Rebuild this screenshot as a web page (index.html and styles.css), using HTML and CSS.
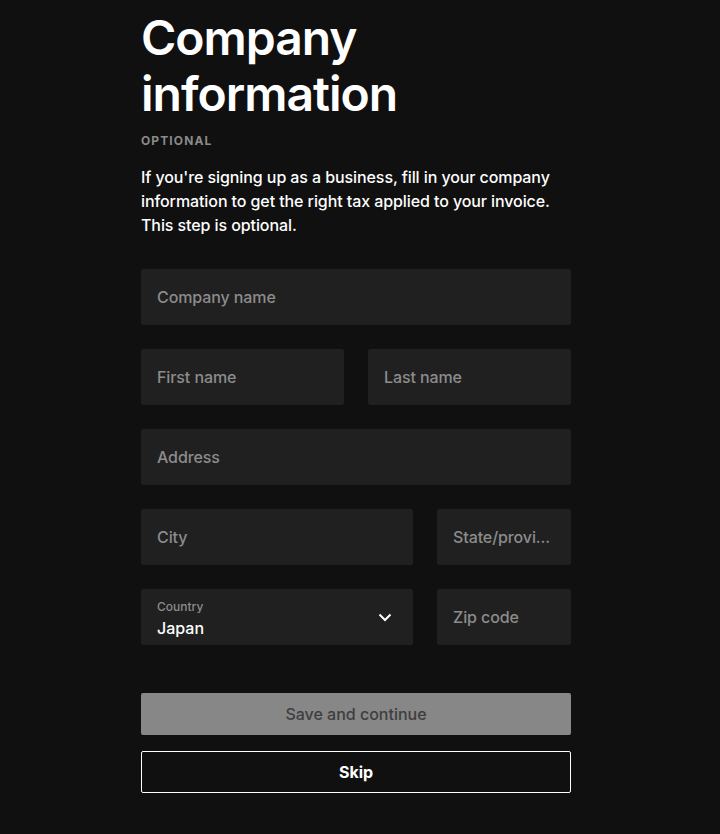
FILE: index.html
```html
<!DOCTYPE html>
<html lang="en">
<head>
<meta charset="utf-8">
<title>Company information</title>
<link rel="stylesheet" href="styles.css">
</head>
<body>
<main class="page">
  <h1 class="title">Company information</h1>
  <div class="eyebrow">OPTIONAL</div>
  <p class="intro">If you're signing up as a business, fill in your company information to get the right tax applied to your invoice. This step is optional.</p>
  <form class="form">
    <div class="field"><span class="ph">Company name</span></div>
    <div class="row half">
      <div class="field"><span class="ph">First name</span></div>
      <div class="field"><span class="ph">Last name</span></div>
    </div>
    <div class="field"><span class="ph">Address</span></div>
    <div class="row wide">
      <div class="field"><span class="ph">City</span></div>
      <div class="field"><span class="ph">State/provi...</span></div>
    </div>
    <div class="row wide">
      <div class="field select">
        <div class="sel-text">
          <span class="sel-label">Country</span>
          <span class="sel-value">Japan</span>
        </div>
        <svg class="chev" width="14" height="9" viewBox="0 0 14 9"><path d="M1.5 1.5 L7 7 L12.5 1.5" fill="none" stroke="#ffffff" stroke-width="2"/></svg>
      </div>
      <div class="field"><span class="ph">Zip code</span></div>
    </div>
    <div class="actions">
      <button type="button" class="btn save">Save and continue</button>
      <button type="button" class="btn skip">Skip</button>
    </div>
  </form>
</main>
</body>
</html>
```
FILE: styles.css
```css
html, body {
  margin: 0;
  padding: 0;
  background: #101010;
}
body {
  font-family: Inter, "Noto Sans", "Liberation Sans", sans-serif;
  color: #ffffff;
  height: 834px;
  overflow: hidden;
}
.page {
  width: 430px;
  margin-left: 141px;
  padding-top: 10px;
}
.title {
  margin: 0;
  font-size: 48px;
  line-height: 56px;
  font-weight: 600;
  letter-spacing: -1px;
}
.eyebrow {
  margin-top: 11px;
  font-size: 12px;
  line-height: 16px;
  font-weight: 700;
  letter-spacing: 1.1px;
  color: #8a8a8a;
}
.intro {
  margin: 16px 0 0;
  font-size: 16px;
  line-height: 24px;
  font-weight: 500;
  letter-spacing: -0.09px;
  color: #ffffff;
}
.form {
  margin-top: 32px;
  display: flex;
  flex-direction: column;
  gap: 24px;
}
.row {
  display: grid;
  gap: 24px;
}
.row.half { grid-template-columns: 1fr 1fr; }
.row.wide { grid-template-columns: 272px 1fr; }
.field {
  height: 56px;
  background: #202020;
  border-radius: 2px;
  display: flex;
  align-items: center;
  padding: 0 16px;
  box-sizing: border-box;
  min-width: 0;
}
.ph {
  font-size: 16px;
  line-height: 24px;
  font-weight: 500;
  letter-spacing: -0.1px;
  color: #8c8c8c;
  white-space: nowrap;
}
.select {
  justify-content: space-between;
  padding-right: 21px;
}
.sel-text {
  display: flex;
  flex-direction: column;
  gap: 3px;
  padding-top: 4px;
}
.sel-label {
  font-size: 12px;
  line-height: 14px;
  font-weight: 500;
  color: #8c8c8c;
}
.sel-value {
  font-size: 16px;
  line-height: 22px;
  font-weight: 500;
  color: #ffffff;
}
.chev { display: block; }
.actions {
  margin-top: 24px;
  display: flex;
  flex-direction: column;
  gap: 16px;
}
.btn {
  height: 42px;
  width: 100%;
  border-radius: 2px;
  font-family: inherit;
  font-size: 16px;
  cursor: pointer;
}
.save {
  background: #878787;
  border: none;
  color: #3e3e3e;
  font-weight: 500;
}
.skip {
  background: transparent;
  border: 1px solid #ffffff;
  color: #ffffff;
  font-weight: 700;
}
```
